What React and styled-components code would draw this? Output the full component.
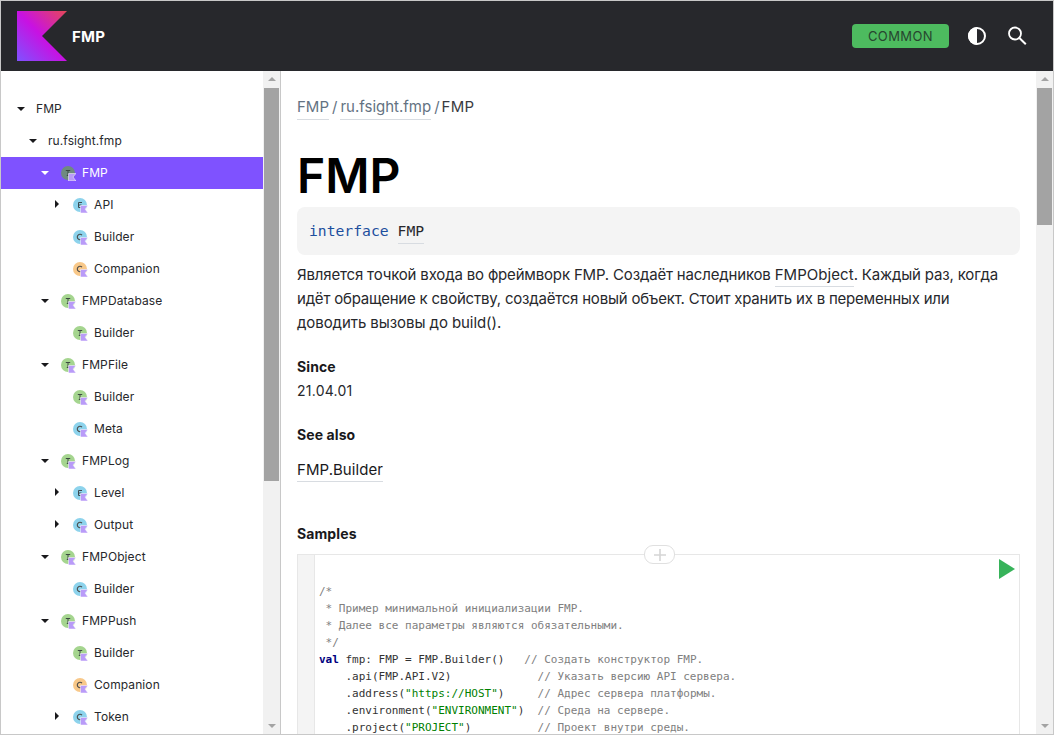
import React from 'react';
import styled, { createGlobalStyle } from 'styled-components';

const GlobalStyle = createGlobalStyle`
  html, body {
    margin: 0;
    padding: 0;
    height: 100%;
    overflow: hidden;
    background: #fff;
  }
`;

const tree = [
  { name: 'FMP', depth: 0, arrow: 'down' },
  { name: 'ru.fsight.fmp', depth: 1, arrow: 'down' },
  { name: 'FMP', depth: 2, arrow: 'down', kind: 'I', color: '#6f8a80', active: true },
  { name: 'API', depth: 3, arrow: 'right', kind: 'E', color: '#8dd3ec' },
  { name: 'Builder', depth: 3, kind: 'C', color: '#8dd3ec' },
  { name: 'Companion', depth: 3, kind: 'O', color: '#f8c889' },
  { name: 'FMPDatabase', depth: 2, arrow: 'down', kind: 'I', color: '#a5d58f' },
  { name: 'Builder', depth: 3, kind: 'I', color: '#a5d58f' },
  { name: 'FMPFile', depth: 2, arrow: 'down', kind: 'I', color: '#a5d58f' },
  { name: 'Builder', depth: 3, kind: 'I', color: '#a5d58f' },
  { name: 'Meta', depth: 3, kind: 'C', color: '#8dd3ec' },
  { name: 'FMPLog', depth: 2, arrow: 'down', kind: 'I', color: '#a5d58f' },
  { name: 'Level', depth: 3, arrow: 'right', kind: 'E', color: '#8dd3ec' },
  { name: 'Output', depth: 3, arrow: 'right', kind: 'C', color: '#8dd3ec' },
  { name: 'FMPObject', depth: 2, arrow: 'down', kind: 'I', color: '#a5d58f' },
  { name: 'Builder', depth: 3, kind: 'C', color: '#8dd3ec' },
  { name: 'FMPPush', depth: 2, arrow: 'down', kind: 'I', color: '#a5d58f' },
  { name: 'Builder', depth: 3, kind: 'I', color: '#a5d58f' },
  { name: 'Companion', depth: 3, kind: 'O', color: '#f8c889' },
  { name: 'Token', depth: 3, arrow: 'right', kind: 'C', color: '#8dd3ec' },
];

const Logo = () => (
  <svg width="50" height="50" viewBox="0 0 50 50">
    <defs>
      <linearGradient id="logoFill" x1="0" y1="1" x2="1" y2="0">
        <stop offset="0" stopColor="#7f52ff" />
        <stop offset="0.5" stopColor="#c811e2" />
        <stop offset="1" stopColor="#e54857" />
      </linearGradient>
    </defs>
    <path d="M50 50H0V0h50L25 25z" fill="url(#logoFill)" />
  </svg>
);

const NodeIcon = ({ kind, color }) => (
  <NodeSvg width="15" height="15" viewBox="0 0 15 15">
    <circle cx="7" cy="7" r="7" fill={color} />
    {kind === 'I' && <path d="M4.8 4.5h4.4M7 4.5v5M5.8 9.5h2.4" stroke="#3c4a42" strokeWidth="1" fill="none" />}
    {kind === 'E' && <path d="M9 4.5H5.5v5H9M5.5 7h3" stroke="#3c4a50" strokeWidth="1" fill="none" />}
    {(kind === 'C' || kind === 'O') && <path d="M9 5.2a2.7 2.7 0 1 0 0 3.6" stroke="#4a4a4a" strokeWidth="1.1" fill="none" />}
    <path d="M7.5 7.5H15L12 11l3 4H7.5z" fill="#b99bf8" stroke="#fff" strokeWidth="0.5" />
  </NodeSvg>
);

const ContrastIcon = () => (
  <svg width="18" height="18" viewBox="0 0 18 18">
    <circle cx="9" cy="9" r="8" fill="#27282c" stroke="#fff" strokeWidth="2" />
    <path d="M9 0a9 9 0 0 0 0 18z" fill="#fff" />
  </svg>
);

const SearchIcon = () => (
  <svg width="20" height="20" viewBox="0 0 20 20" fill="none" stroke="#fff">
    <circle cx="8" cy="7.5" r="6" strokeWidth="1.8" />
    <path d="M12.4 12l6.4 6.2" strokeWidth="2" />
  </svg>
);

const App = () => (
  <Frame>
    <GlobalStyle />
    <Header>
      <Brand>
        <Logo />
        <BrandName>FMP</BrandName>
      </Brand>
      <HeaderActions>
        <PlatformTag>COMMON</PlatformTag>
        <ThemeToggle><ContrastIcon /></ThemeToggle>
        <SearchIcon />
      </HeaderActions>
    </Header>
    <Body>
      <Sidebar>
        <Tree>
          {tree.map((node, i) => (
            <TreeRow key={i} $depth={node.depth} $active={node.active}>
              <Arrow $dir={node.arrow} $active={node.active} />
              {node.kind && <NodeIcon kind={node.kind} color={node.color} />}
              <TreeLabel $hasIcon={!!node.kind}>{node.name}</TreeLabel>
            </TreeRow>
          ))}
        </Tree>
        <Scrollbar>
          <ScrollUp />
          <ScrollThumb $height={393} />
          <ScrollSpacer />
          <ScrollDown />
        </Scrollbar>
      </Sidebar>
      <Main>
        <Content>
          <Breadcrumbs>
            <Crumb>FMP</Crumb>
            <Sep>/</Sep>
            <Crumb>ru.fsight.fmp</Crumb>
            <Sep>/</Sep>
            <Current>FMP</Current>
          </Breadcrumbs>
          <Title>FMP</Title>
          <Signature>
            <Keyword>interface</Keyword>
            <SigLink>FMP</SigLink>
          </Signature>
          <Description>
            <DescLine $tracking={-0.17}>Является точкой входа во фреймворк FMP. Создаёт наследников <TextLink>FMPObject</TextLink>. Каждый раз, когда</DescLine>
            <DescLine $tracking={-0.21}>идёт обращение к свойству, создаётся новый объект. Стоит хранить их в переменных или</DescLine>
            <DescLine $tracking={-0.07}>доводить вызовы до build().</DescLine>
          </Description>
          <SectionHead>Since</SectionHead>
          <SectionText>21.04.01</SectionText>
          <SectionHead>See also</SectionHead>
          <SeeAlsoRow><TextLink>FMP.Builder</TextLink></SeeAlsoRow>
          <SamplesHead>Samples</SamplesHead>
          <Sample>
            <Gutter />
            <Code>
              <Comment>{'/*\n * Пример минимальной инициализации FMP.\n * Далее все параметры являются обязательными.\n */'}</Comment>
              {'\n'}
              <CodeKeyword>val</CodeKeyword>{' fmp: FMP = FMP.Builder()   '}<Comment>// Создать конструктор FMP.</Comment>{'\n'}
              {'    .api(FMP.API.V2)             '}<Comment>// Указать версию API сервера.</Comment>{'\n'}
              {'    .address('}<Str>"https://HOST"</Str>{')     '}<Comment>// Адрес сервера платформы.</Comment>{'\n'}
              {'    .environment('}<Str>"ENVIRONMENT"</Str>{')  '}<Comment>// Среда на сервере.</Comment>{'\n'}
              {'    .project('}<Str>"PROJECT"</Str>{')          '}<Comment>// Проект внутри среды.</Comment>
            </Code>
            <AddCell>
              <svg width="12" height="12" viewBox="0 0 12 12" stroke="#d5d5d5" strokeWidth="1.6">
                <path d="M6 0v12M0 6h12" />
              </svg>
            </AddCell>
            <RunButton>
              <svg width="16" height="20" viewBox="0 0 16 20"><path d="M0 0l16 10L0 20z" fill="#37b35a" /></svg>
            </RunButton>
          </Sample>
        </Content>
        <Scrollbar>
          <ScrollUp />
          <ScrollThumb $height={137} />
          <ScrollSpacer />
          <ScrollDown />
        </Scrollbar>
      </Main>
    </Body>
  </Frame>
);

const Frame = styled.div`
  box-sizing: border-box;
  width: 1054px;
  height: 735px;
  border: 1px solid #c8c8c8;
  display: flex;
  flex-direction: column;
  overflow: hidden;
  font-family: Inter, "Liberation Sans", sans-serif;
  color: #19191c;
`;

const Header = styled.header`
  flex: 0 0 70px;
  background: #27282c;
  display: flex;
  align-items: center;
  justify-content: space-between;
  padding: 0 26px 0 16px;
`;

const Brand = styled.div`
  display: flex;
  align-items: center;
  gap: 5px;
`;

const BrandName = styled.span`
  color: #fff;
  font-size: 15px;
  font-weight: 700;
  letter-spacing: 0.2px;
`;

const HeaderActions = styled.div`
  display: flex;
  align-items: center;
  gap: 21px;
`;

const PlatformTag = styled.span`
  box-sizing: border-box;
  width: 97px;
  height: 24px;
  margin-right: -2px;
  border-radius: 4px;
  background: #4dbb5f;
  color: #27462f;
  font-size: 13px;
  letter-spacing: 0.4px;
  display: flex;
  align-items: center;
  justify-content: center;
`;

const ThemeToggle = styled.span`
  display: flex;
  line-height: 0;
`;

const Body = styled.div`
  flex: 1;
  min-height: 0;
  display: flex;
`;

const Sidebar = styled.aside`
  flex: 0 0 279px;
  display: flex;
  border-right: 1px solid #c8c8c8;
`;

const Tree = styled.nav`
  flex: 1;
  padding-top: 22px;
  overflow: hidden;
`;

const TreeRow = styled.div`
  box-sizing: border-box;
  height: 32px;
  display: flex;
  align-items: center;
  padding: 0 0 2px ${p => 16 + p.$depth * 12}px;
  background: ${p => (p.$active ? '#7f52ff' : 'transparent')};
  color: ${p => (p.$active ? '#fff' : '#27282c')};
`;

const NodeSvg = styled.svg`
  margin-top: 2px;
`;

const Arrow = styled.span`
  flex: 0 0 20px;
  height: 8px;
  position: relative;
  &::before {
    content: '';
    position: absolute;
    display: ${p => (p.$dir ? 'block' : 'none')};
    ${p => (p.$dir === 'down'
      ? `left: 0; top: 3px; border-left: 4px solid transparent; border-right: 4px solid transparent; border-top: 4px solid ${p.$active ? '#fff' : '#19191c'};`
      : `left: 2px; top: 0; border-top: 4px solid transparent; border-bottom: 4px solid transparent; border-left: 4px solid #19191c;`)}
  }
`;

const TreeLabel = styled.span`
  font-size: 12px;
  letter-spacing: 0.1px;
  margin-left: ${p => (p.$hasIcon ? '6px' : '-1px')};
`;

const Scrollbar = styled.div`
  flex: 0 0 17px;
  background: #f1f1f1;
  display: flex;
  flex-direction: column;
  align-items: stretch;
`;

const ScrollUp = styled.div`
  flex: 0 0 17px;
  position: relative;
  &::before {
    content: '';
    position: absolute;
    left: 5px;
    top: 6px;
    border-left: 4px solid transparent;
    border-right: 4px solid transparent;
    border-bottom: 4px solid #a3a3a3;
  }
`;

const ScrollDown = styled(ScrollUp)`
  &::before {
    border-bottom: 0;
    top: 7px;
    border-top: 4px solid #a3a3a3;
  }
`;

const ScrollThumb = styled.div`
  flex: 0 0 ${p => p.$height}px;
  background: #a3a3a3;
  margin: 0 1px;
`;

const ScrollSpacer = styled.div`
  flex: 1;
`;

const Main = styled.main`
  flex: 1;
  min-width: 0;
  display: flex;
`;

const Content = styled.div`
  flex: 1;
  min-width: 0;
  padding: 24px 16px 0 16px;
  overflow: hidden;
  font-size: 15px;
  line-height: 24px;
`;

const Breadcrumbs = styled.div`
  display: flex;
  align-items: center;
  height: 24px;
  font-size: 15px;
  color: #637282;
`;

const Crumb = styled.span`
  border-bottom: 1px solid #d8dce1;
  line-height: 24px;
`;

const Sep = styled.span`
  margin: 0 3px;
`;

const Current = styled.span`
  margin-left: -1px;
  color: #3a3b40;
  letter-spacing: 0.2px;
`;

const Title = styled.h1`
  margin: 29px 0 0;
  font-size: 48px;
  line-height: 56px;
  font-weight: 600;
  color: #000;
`;

const Signature = styled.div`
  box-sizing: border-box;
  height: 48px;
  margin-top: 3px;
  padding: 0 12px;
  background: #f4f4f4;
  border-radius: 8px;
  display: flex;
  align-items: center;
  gap: 9px;
  font-family: "DejaVu Sans Mono", "Liberation Mono", monospace;
  font-size: 14.7px;
`;

const Keyword = styled.span`
  color: #1d4f9e;
`;

const SigLink = styled.span`
  color: #27282c;
  border-bottom: 1px solid #d8dce1;
`;

const Description = styled.div`
  margin: 8px 0 0;
  color: #27282c;
`;

const DescLine = styled.span`
  display: block;
  letter-spacing: ${p => p.$tracking}px;
`;

const TextLink = styled.span`
  border-bottom: 1px solid #d8dce1;
  padding-bottom: 2px;
  letter-spacing: 0.05px;
`;

const SectionHead = styled.h4`
  margin: 20px 0 0;
  font-size: 14px;
  line-height: 24px;
  font-weight: 700;
  letter-spacing: 0.1px;
`;

const SectionText = styled.div`
  font-size: 14px;
  letter-spacing: 0.25px;
  color: #27282c;
`;

const SeeAlsoRow = styled.div`
  margin-top: 11px;
`;

const SamplesHead = styled(SectionHead)`
  margin-top: 40px;
`;

const Sample = styled.div`
  box-sizing: border-box;
  position: relative;
  display: flex;
  height: 300px;
  margin-top: 8px;
  border: 1px solid #e7e7e7;
`;

const Gutter = styled.div`
  flex: 0 0 16px;
  background: #f4f4f4;
  border-right: 1px solid #e7e7e7;
`;

const Code = styled.pre`
  margin: 0;
  padding: 28px 0 0 4px;
  font-family: "DejaVu Sans Mono", "Liberation Mono", monospace;
  font-size: 11px;
  line-height: 17px;
  color: #333;
`;

const Comment = styled.span`
  color: #808080;
`;

const CodeKeyword = styled.span`
  color: #000080;
  font-weight: 700;
`;

const Str = styled.span`
  color: #008000;
`;

const AddCell = styled.div`
  position: absolute;
  top: -10px;
  left: 346px;
  box-sizing: border-box;
  width: 31px;
  height: 19px;
  background: #fff;
  border: 1px solid #e0e0e0;
  border-radius: 9px;
  display: flex;
  align-items: center;
  justify-content: center;
`;

const RunButton = styled.div`
  position: absolute;
  top: 4px;
  right: 4px;
  line-height: 0;
`;

export default App;
